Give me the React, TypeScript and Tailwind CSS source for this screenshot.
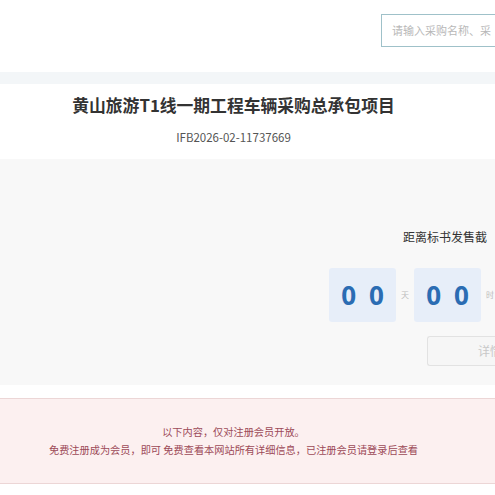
const CountBox = () => (
  <div className="w-[67px] h-[54px] bg-[#e7eef9] rounded-[3px] flex items-center justify-center gap-[13px] text-[26px] font-bold text-[#2b6cb3] font-['Open_Sans',sans-serif] shrink-0">
    <span>0</span>
    <span>0</span>
  </div>
);

const Unit = ({ label }: { label: string }) => (
  <div className="w-[18px] shrink-0 text-center text-[8px] text-[#bdbdbd]">{label}</div>
);

export default function App() {
  return (
    <div className="w-[495px] h-[495px] overflow-hidden bg-white font-['Noto_Sans_CJK_SC',sans-serif]">
      {/* header with search */}
      <div className="h-[72px] pl-[381px] pt-[14px] overflow-hidden">
        <div className="w-[114px] h-[33px] border border-r-0 border-[#9fc1c9] flex items-center pl-[10px] text-[11px] text-[#b8b8b8] whitespace-nowrap overflow-hidden">
          请输入采购名称、采
        </div>
      </div>
      <div className="h-[12px] bg-[#f3f6f8]" />

      {/* title */}
      <div className="h-[75px] flex flex-col items-center pt-[9px] pr-[28px]">
        <h1 className="text-[16.8px] leading-[24px] font-bold text-[#333]">
          黄山旅游T1线一期工程车辆采购总承包项目
        </h1>
        <p className="mt-[13px] text-[11.5px] leading-[14px] text-[#555]">IFB2026-02-11737669</p>
      </div>

      {/* countdown */}
      <div className="h-[226px] bg-[#f8f8f8] pl-[329px] pt-[70px] overflow-hidden">
        <div className="pl-[74px] text-[12px] leading-[16px] text-[#333] whitespace-nowrap">距离标书发售截</div>
        <div className="mt-[23px] flex items-center">
          <CountBox />
          <Unit label="天" />
          <CountBox />
          <Unit label="时" />
        </div>
        <div className="mt-[14px] ml-[98px] w-[68px] h-[30px] border border-r-0 border-[#e2e2e2] rounded-l-[3px] bg-[#f6f6f6] flex items-center pl-[50px] text-[12px] text-[#c8c8c8] whitespace-nowrap overflow-hidden">
          详情
        </div>
      </div>

      <div className="h-[13px]" />

      {/* member notice */}
      <div className="h-[86px] border-y border-[#ecd6d6] bg-[#fcf0f0] flex flex-col items-center justify-center pr-[28px] text-[10.2px] leading-[18px] text-[#9c4a58]">
        <p>以下内容，仅对注册会员开放。</p>
        <p>免费注册成为会员，即可 免费查看本网站所有详细信息，已注册会员请登录后查看</p>
      </div>
    </div>
  );
}
